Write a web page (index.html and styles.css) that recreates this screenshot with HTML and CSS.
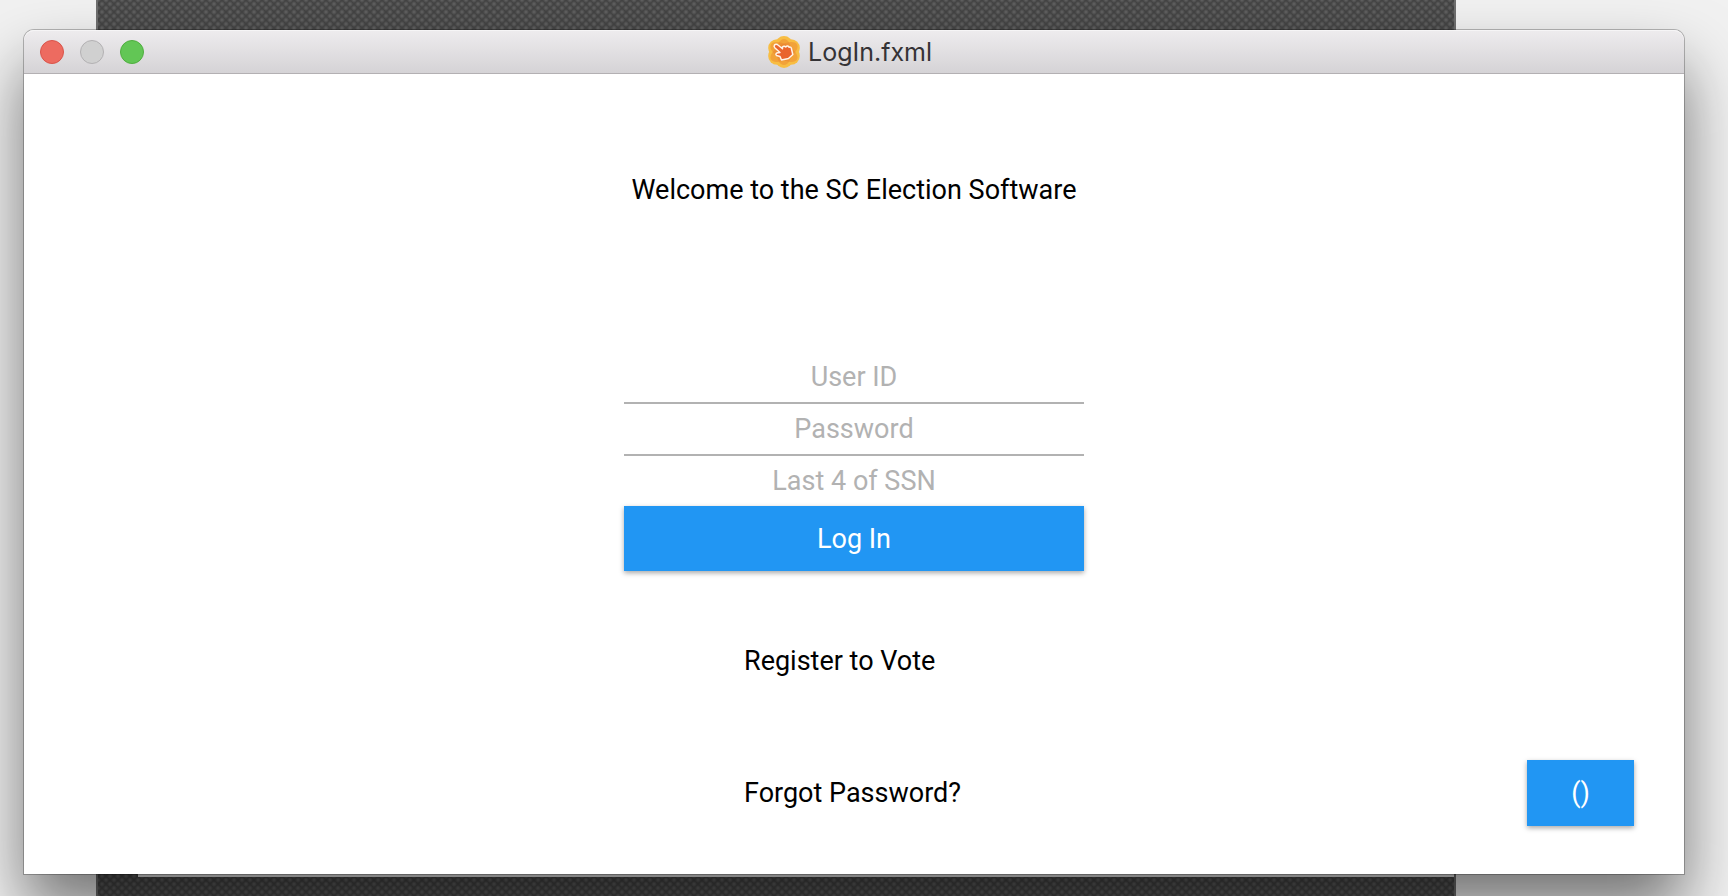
FILE: index.html
```html
<!DOCTYPE html>
<html lang="en">
<head>
<meta charset="utf-8">
<meta name="viewport" content="width=device-width, initial-scale=1">
<title>LogIn.fxml</title>
<link rel="stylesheet" href="styles.css">
</head>
<body>
<div class="desktop">
  <div class="backdrop"><div class="backdrop-edge"></div></div>
  <main class="window">
    <header class="titlebar">
      <div class="controls">
        <button class="control control-close" type="button" aria-label="Close"></button>
        <button class="control control-minimize" type="button" aria-label="Minimize" disabled></button>
        <button class="control control-zoom" type="button" aria-label="Zoom"></button>
      </div>
      <div class="title">
        <svg class="title-icon" viewBox="0 0 32 32" aria-hidden="true">
          <g fill="#f8bd42">
            <circle cx="16" cy="8.500" r="8.500"/><circle cx="16" cy="23.500" r="8.500"/>
            <circle cx="9" cy="12" r="8.800"/><circle cx="23" cy="12" r="8.800"/>
            <circle cx="9" cy="20" r="8.800"/><circle cx="23" cy="20" r="8.800"/>
          </g>
          <g fill="#e8752c" fill-opacity=".38">
            <ellipse cx="16" cy="16" rx="7.500" ry="13"/>
            <ellipse cx="16" cy="16" rx="7.500" ry="15" transform="rotate(60 16 16)"/>
            <ellipse cx="16" cy="16" rx="7.500" ry="15" transform="rotate(120 16 16)"/>
          </g>
          <path d="M6.500 9C7.500 7.700 9 8 10 9L14.500 12.800L14.300 11.300C15.500 9.800 17 10 17.800 11C19 9.500 20.500 10 21 11.200C22.500 10.500 23.400 11.500 23.500 13L24.800 18.500L20.500 22.500L13.500 24L12 20.500L8.500 19.500C7 18 8.500 16.500 10.500 16.800L12 16.500L7 12C6 11 5.800 10 6.500 9Z" fill="#e9642c" stroke="#fff4e8" stroke-width="1.500" stroke-linejoin="round"/>
        </svg>
        <span>LogIn.fxml</span>
      </div>
    </header>
    <div class="content">
      <h1 class="welcome">Welcome to the SC Election Software</h1>
      <form class="login">
        <input class="field" type="text" aria-label="User ID" placeholder="User ID">
        <input class="field" type="password" aria-label="Password" placeholder="Password">
        <input class="field field-last" type="text" aria-label="Last 4 of SSN" placeholder="Last 4 of SSN">
        <button class="button" type="button">Log In</button>
      </form>
      <a class="link register" href="#">Register to Vote</a>
      <a class="link forgot" href="#">Forgot Password?</a>
      <button class="button button-small" type="button">()</button>
    </div>
  </main>
</div>
</body>
</html>
```
FILE: styles.css
```css
* {
  box-sizing: border-box;
}

body {
  margin: 0;
  background: #f1f1f1;
  color: #000;
  font-family: Roboto, "Liberation Sans", sans-serif;
  font-size: 27px;
  line-height: 32px;
}

.desktop {
  display: grid;
  grid-template-columns: 96px 1fr 272px;
  min-height: 100vh;
  overflow: hidden;
}

.backdrop {
  grid-area: 1 / 2;
  display: flex;
  flex-direction: column;
  justify-content: flex-end;
  padding: 0 0 19px 40px;
  border: solid #6e6e6e;
  border-width: 0 2px;
  background-color: #444;
  background-image:
    radial-gradient(circle, #666 0, transparent 3px),
    radial-gradient(circle, #666 0, transparent 3px);
  background-position: 0 0, 4px 4px;
  background-size: 8px 8px;
}

.backdrop-edge {
  height: 12px;
  background: #f1f1f1;
}

.window {
  grid-area: 1 / 1 / 2 / 4;
  display: flex;
  flex-direction: column;
  margin: 30px 44px 22px 24px;
  border-radius: 10px 10px 0 0;
  background: #fff;
  box-shadow: 0 0 0 1px rgba(0, 0, 0, .25), 0 36px 64px rgba(0, 0, 0, .52);
}

.titlebar {
  display: grid;
  grid-template-columns: 1fr auto 1fr;
  align-items: center;
  height: 44px;
  padding: 0 16px;
  border-bottom: 1px solid #b3b0b3;
  border-radius: 10px 10px 0 0;
  background: linear-gradient(#eeecee, #d5d3d6);
  box-shadow: inset 0 1px #f6f5f6;
}

.controls {
  display: flex;
  gap: 16px;
}

.control {
  width: 24px;
  height: 24px;
  padding: 0;
  border: 1px solid;
  border-radius: 50%;
}

.control-close {
  border-color: #d9544a;
  background: #ed6b60;
}

.control-minimize {
  border-color: #b3b1b3;
  background: #d0d0d0;
}

.control-zoom {
  border-color: #4fae3f;
  background: #62c655;
}

.title {
  display: flex;
  align-items: center;
  gap: 8px;
  padding-right: 8px;
  color: #353336;
  font-family: Inter, Roboto, sans-serif;
  font-size: 25px;
}

.title-icon {
  width: 32px;
  height: 32px;
}

.content {
  flex: 1;
  display: grid;
  grid-template-columns: 1fr 460px 1fr;
  align-content: start;
  padding: 100px 50px 48px;
}

.welcome {
  grid-column: 2;
  margin: 0 0 146px;
  font-size: 27px;
  font-weight: 400;
  line-height: 32px;
  text-align: center;
}

.login {
  grid-column: 2;
  display: flex;
  flex-direction: column;
}

.field {
  width: 100%;
  height: 52px;
  padding: 8px 0;
  border: 0;
  border-bottom: 2px solid #b2b2b2;
  border-radius: 0;
  outline: 0;
  background: transparent;
  color: #000;
  font: inherit;
  text-align: center;
}

.field::placeholder {
  color: #b2b2b2;
  opacity: 1;
}

.field-last {
  height: 50px;
  border-bottom: 0;
}

.button {
  height: 65px;
  padding: 0;
  border: 0;
  background: #2196f3;
  box-shadow: 0 2px 5px rgba(0, 0, 0, .35);
  color: #fff;
  font: inherit;
}

.link {
  grid-column: 2;
  justify-self: start;
  margin-left: 120px;
  color: #000;
  text-decoration: none;
}

.register {
  margin-top: 74px;
  margin-bottom: 83px;
}

.forgot {
  align-self: center;
}

.button-small {
  grid-column: 3;
  justify-self: end;
  width: 107px;
  height: 66px;
}
```
